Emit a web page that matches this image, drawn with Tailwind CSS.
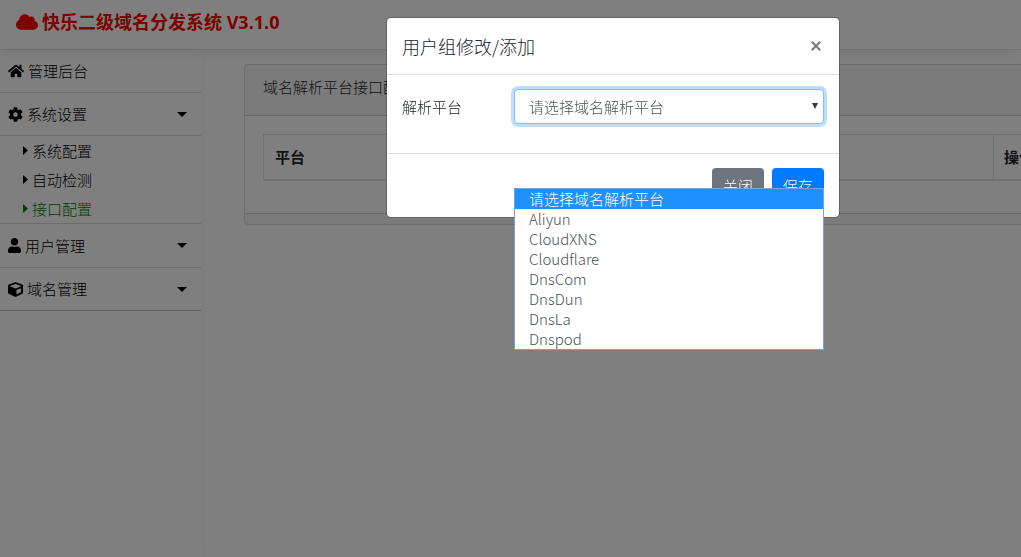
<!DOCTYPE html>
<html lang="zh-CN">
	<head>
		<meta charset="UTF-8" />
		<meta name="viewport" content="width=device-width, initial-scale=1.0" />
		<script src="https://cdn.jsdelivr.net/npm/@tailwindcss/browser@4"></script>
		<title>快乐二级域名分发系统</title>
	</head>
	<body
		class="bg-white text-[#212529] text-[15px] leading-[22px] font-light font-['Noto_Sans_CJK_SC','Open_Sans',sans-serif] overflow-hidden"
	>
		<div class="flex flex-col min-h-screen">
			<header
				class="relative z-10 flex items-center h-[50px] px-4 pb-[6px] border-b border-black/10 shadow-[0_2px_10px_rgba(0,0,0,0.08)]"
			>
				<a
					href="#"
					class="flex items-center gap-1 text-lg font-bold text-[#f00] font-['Open_Sans','Noto_Sans_CJK_SC',sans-serif]"
				>
					<svg class="w-[22px] h-4" viewBox="0 32 640 448" fill="currentColor">
						<path
							d="M537.600 226.600c4.100-10.700 6.400-22.400 6.400-34.600 0-53-43-96-96-96-19.700 0-38.100 6-53.300 16.200C367 64.200 315.300 32 256 32c-88.400 0-160 71.600-160 160 0 2.700.1 5.400.2 8.100C40.200 219.800 0 273.200 0 336c0 79.500 64.500 144 144 144h368c70.700 0 128-57.300 128-128 0-61.900-44-113.600-102.400-125.400z"
						/>
					</svg>
					<span>快乐二级域名分发系统 V3.1.0</span>
				</a>
			</header>

			<div class="flex grow">
				<nav
					class="shrink-0 w-[201px] text-black shadow-[2px_0_10px_rgba(0,0,0,0.04)]"
				>
					<a
						href="#"
						class="flex items-center gap-1 h-[43px] px-2 border-b border-black/15"
					>
						<svg class="w-4 h-4" viewBox="0 0 576 512" fill="currentColor">
							<path
								d="M280.370 148.260L96 300.110V464a16 16 0 0 0 16 16l112.060-.290a16 16 0 0 0 15.920-16V368a16 16 0 0 1 16-16h64a16 16 0 0 1 16 16v95.640a16 16 0 0 0 16 16.050L464 480a16 16 0 0 0 16-16V300L295.670 148.260a12.190 12.190 0 0 0-15.300 0zM571.600 251.470L488 182.560V44.050a12 12 0 0 0-12-12h-56a12 12 0 0 0-12 12v72.610L318.470 43a48 48 0 0 0-61 0L4.340 251.470a12 12 0 0 0-1.600 16.900l25.500 31A12 12 0 0 0 45.150 301l235.220-193.740a12.190 12.190 0 0 1 15.300 0L530.900 301a12 12 0 0 0 16.900-1.600l25.500-31a12 12 0 0 0-1.700-16.930z"
							/>
						</svg>
						管理后台
					</a>
					<a
						href="#"
						class="flex items-center gap-1 h-[43px] pl-2 pr-[14px] border-b border-black/15"
					>
						<svg class="w-[15px] h-[15px]" viewBox="0 0 512 512" fill="currentColor">
							<path
								d="M487.400 315.700l-42.600-24.600c4.300-23.200 4.300-47 0-70.200l42.600-24.600c4.900-2.800 7.100-8.600 5.500-14-11.100-35.600-30-67.800-54.700-94.600-3.800-4.100-10-5.100-14.800-2.300L380.800 110c-17.900-15.400-38.500-27.300-60.800-35.100V25.800c0-5.600-3.900-10.500-9.400-11.700-36.700-8.200-74.300-7.800-109.200 0-5.500 1.200-9.400 6.100-9.400 11.700V75c-22.200 7.900-42.800 19.800-60.800 35.100L88.700 85.500c-4.900-2.800-11-1.900-14.800 2.300-24.700 26.700-43.600 58.900-54.700 94.600-1.700 5.400.6 11.200 5.500 14L67.300 221c-4.300 23.200-4.300 47 0 70.200l-42.600 24.600c-4.900 2.800-7.100 8.600-5.500 14 11.100 35.600 30 67.800 54.700 94.600 3.800 4.100 10 5.100 14.800 2.300l42.600-24.600c17.900 15.400 38.500 27.300 60.800 35.100v49.200c0 5.600 3.900 10.500 9.400 11.700 36.700 8.200 74.300 7.800 109.200 0 5.500-1.200 9.400-6.100 9.400-11.700v-49.200c22.200-7.900 42.800-19.800 60.800-35.100l42.600 24.600c4.900 2.800 11 1.900 14.800-2.300 24.700-26.700 43.600-58.900 54.700-94.600 1.500-5.500-.7-11.300-5.600-14.100zM256 336c-44.100 0-80-35.900-80-80s35.900-80 80-80 80 35.900 80 80-35.900 80-80 80z"
							/>
						</svg>
						<span class="grow">系统设置</span>
						<svg class="w-[10px] h-[5px]" viewBox="0 0 10 5" fill="currentColor">
							<path d="M0 0h10L5 5z" />
						</svg>
					</a>
					<ul class="border-b border-black/15">
						<li>
							<a href="#" class="flex items-center gap-1 h-[29px] pl-[23px]">
								<svg class="w-[5px] h-[9px]" viewBox="0 0 5 9" fill="currentColor">
									<path d="M0 0l5 4.500-5 4.500z" />
								</svg>
								系统配置
							</a>
						</li>
						<li>
							<a href="#" class="flex items-center gap-1 h-[29px] pl-[23px]">
								<svg class="w-[5px] h-[9px]" viewBox="0 0 5 9" fill="currentColor">
									<path d="M0 0l5 4.500-5 4.500z" />
								</svg>
								自动检测
							</a>
						</li>
						<li>
							<a
								href="#"
								class="flex items-center gap-1 h-[29px] pl-[23px] text-[#008000]"
							>
								<svg class="w-[5px] h-[9px]" viewBox="0 0 5 9" fill="currentColor">
									<path d="M0 0l5 4.500-5 4.500z" />
								</svg>
								接口配置
							</a>
						</li>
					</ul>
					<a
						href="#"
						class="flex items-center gap-1 h-[44px] pl-2 pr-[14px] border-b border-black/15"
					>
						<svg class="w-[13px] h-[15px]" viewBox="0 0 448 512" fill="currentColor">
							<path
								d="M224 256c70.700 0 128-57.300 128-128S294.700 0 224 0 96 57.300 96 128s57.300 128 128 128zm89.600 32h-16.700c-22.200 10.200-46.900 16-72.900 16s-50.600-5.800-72.900-16h-16.700C60.200 288 0 348.200 0 422.400V464c0 26.500 21.500 48 48 48h352c26.500 0 48-21.500 48-48v-41.600c0-74.200-60.200-134.400-134.400-134.400z"
							/>
						</svg>
						<span class="grow">用户管理</span>
						<svg class="w-[10px] h-[5px]" viewBox="0 0 10 5" fill="currentColor">
							<path d="M0 0h10L5 5z" />
						</svg>
					</a>
					<a
						href="#"
						class="flex items-center gap-1 h-[43px] pl-2 pr-[14px] border-b border-black/25"
					>
						<svg class="w-[15px] h-[15px]" viewBox="0 0 512 512" fill="currentColor">
							<path
								d="M239.100 6.300l-208 78c-18.700 7-31.100 25-31.100 45v225.100c0 18.200 10.300 34.800 26.500 42.900l208 104c13.500 6.800 29.400 6.800 42.900 0l208-104c16.300-8.100 26.500-24.800 26.500-42.900V129.300c0-20-12.400-37.900-31.100-44.900l-208-78C262 2.200 250 2.200 239.100 6.300zM256 68.400l192 72v1.100l-192 78-192-78v-1.100l192-72zm32 356V275.500l160-65v133.900l-160 80z"
							/>
						</svg>
						<span class="grow">域名管理</span>
						<svg class="w-[10px] h-[5px]" viewBox="0 0 10 5" fill="currentColor">
							<path d="M0 0h10L5 5z" />
						</svg>
					</a>
				</nav>

				<main class="grow min-w-0 overflow-hidden pl-[43px] pt-[14px]">
					<div class="min-w-[964px] rounded border border-black/15">
						<div
							class="h-[51px] px-[18px] pb-[6px] flex items-center bg-black/3 border-b border-black/15"
						>
							域名解析平台接口配置
						</div>
						<div class="px-[18px] pt-[18px] pb-8">
							<table class="w-full table-fixed border-collapse">
								<thead>
									<tr class="h-[45px] text-left">
										<th class="w-[730px] px-[11px] border border-b-2 border-[#dee2e6]">
											平台
										</th>
										<th class="px-[10px] border border-b-2 border-[#dee2e6]">
											操作
										</th>
									</tr>
								</thead>
							</table>
						</div>
						<div class="h-[11px] bg-black/3 border-t border-black/15"></div>
					</div>
				</main>
			</div>
		</div>

		<!-- modal -->
		<div
			class="fixed inset-0 z-20 flex justify-center items-start pl-[205px] pt-[18px] bg-black/50"
		>
			<div
				role="dialog"
				aria-labelledby="modal-title"
				class="w-[452px] bg-white rounded outline outline-black/20"
			>
				<div
					class="flex items-center justify-between h-[57px] px-[15px] border-b border-[#dee2e6]"
				>
					<h5 id="modal-title" class="text-lg">用户组修改/添加</h5>
					<button type="button" aria-label="关闭" class="p-[3px] text-[#7f7f7f]">
						<svg
							class="w-[10px] h-[10px]"
							viewBox="0 0 10 10"
							fill="none"
							stroke="currentColor"
							stroke-width="2.2"
						>
							<path d="M.8.8l8.400 8.400M9.200.8L.8 9.200" />
						</svg>
					</button>
				</div>
				<div class="flex items-start px-[15px] pt-[14px] pb-[29px] border-b border-[#dee2e6]">
					<label for="platform" class="w-[112px] pt-[7px]">解析平台</label>
					<div class="relative grow">
						<select
							id="platform"
							class="block w-full h-[35px] px-[14px] appearance-none bg-white text-[#495057] border border-[#80bdff] rounded ring-3 ring-[#007bff]/25 outline-none"
						>
							<option>请选择域名解析平台</option>
							<option>Aliyun</option>
							<option>CloudXNS</option>
							<option>Cloudflare</option>
							<option>DnsCom</option>
							<option>DnsDun</option>
							<option>DnsLa</option>
							<option>Dnspod</option>
						</select>
						<svg
							class="absolute right-[6px] top-[14px] w-[6px] h-[6px] text-[#343a40] pointer-events-none"
							viewBox="0 0 6 6"
							fill="currentColor"
						>
							<path d="M0 0h6L3 6z" />
						</svg>
						<ul
							class="absolute z-10 top-[99px] left-0 w-full bg-white border border-[#7b9fdd] text-[#495057] leading-5"
						>
							<li class="px-[14px] bg-[#1e90ff] text-white">请选择域名解析平台</li>
							<li class="px-[14px]">Aliyun</li>
							<li class="px-[14px]">CloudXNS</li>
							<li class="px-[14px]">Cloudflare</li>
							<li class="px-[14px]">DnsCom</li>
							<li class="px-[14px]">DnsDun</li>
							<li class="px-[14px]">DnsLa</li>
							<li class="px-[14px]">Dnspod</li>
						</ul>
					</div>
				</div>
				<div class="flex justify-end gap-2 px-[15px] py-[14px] text-white">
					<button type="button" class="h-[35px] px-[11px] rounded bg-[#6c757d]">
						关闭
					</button>
					<button type="button" class="h-[35px] px-[11px] rounded bg-[#007bff]">
						保存
					</button>
				</div>
			</div>
		</div>
	</body>
</html>
